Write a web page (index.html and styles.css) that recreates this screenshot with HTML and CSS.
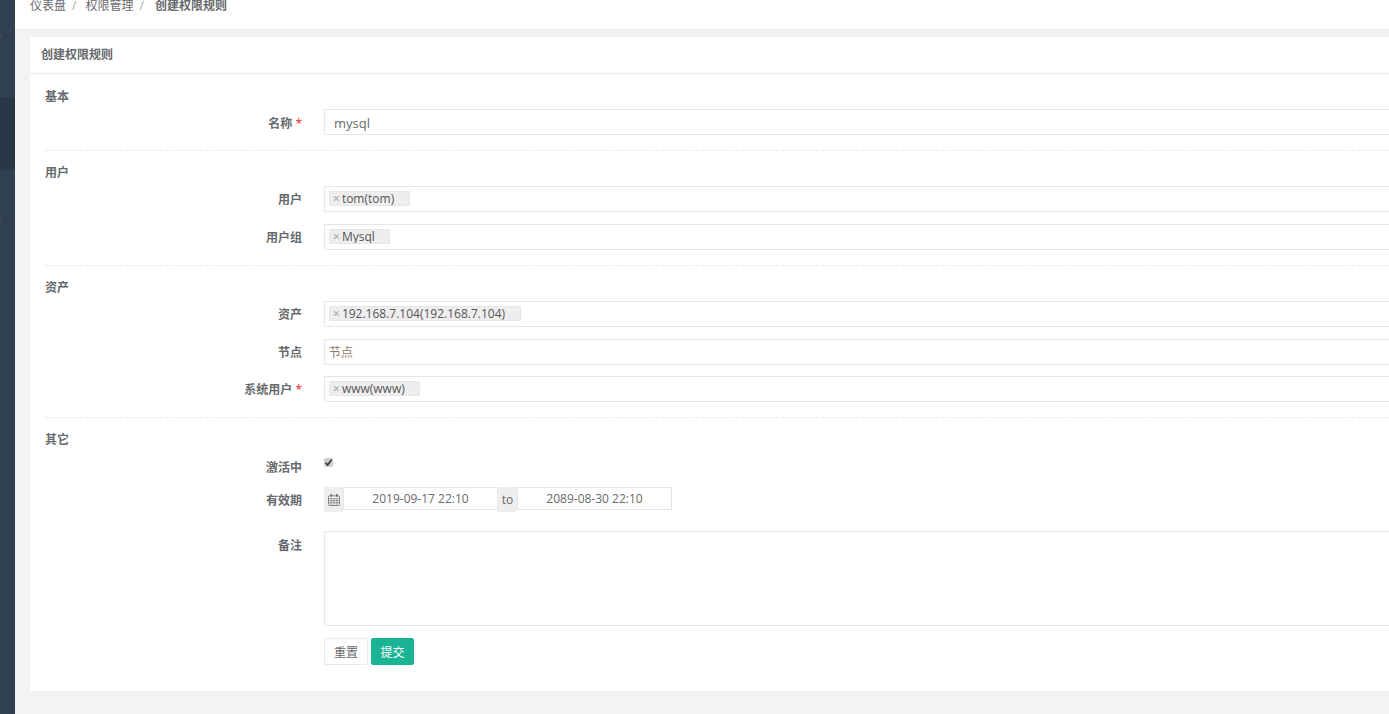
FILE: index.html
```html
<!DOCTYPE html>
<html lang="zh">
<head>
<meta charset="utf-8">
<title>创建权限规则</title>
<link rel="stylesheet" href="styles.css">
</head>
<body>
<div class="app">
  <aside class="sidebar">
    <div class="side-top"><i class="mark m1"></i><i class="mark m2"></i></div>
    <div class="side-active"></div>
    <div class="side-bottom"><i class="mark m3"></i><i class="mark m4"></i></div>
  </aside>
  <main class="main">
    <nav class="crumbs">
      <span class="crumb">仪表盘</span><span class="sep">/</span>
      <span class="crumb">权限管理</span><span class="sep">/</span>
      <strong class="crumb-current">创建权限规则</strong>
    </nav>
    <section class="card">
      <h5 class="card-title">创建权限规则</h5>
      <form class="form">
        <h3 class="group">基本</h3>
        <div class="row r-name"><label class="lbl">名称 <em>*</em></label><div class="field text-field">mysql</div></div>
        <div class="dash"></div>

        <h3 class="group">用户</h3>
        <div class="row r-a"><label class="lbl">用户</label><div class="field"><span class="tag t-tom"><b>×</b>tom(tom)</span></div></div>
        <div class="row r-b"><label class="lbl">用户组</label><div class="field"><span class="tag t-mysql"><b>×</b>Mysql</span></div></div>
        <div class="dash"></div>

        <h3 class="group">资产</h3>
        <div class="row r-a"><label class="lbl">资产</label><div class="field"><span class="tag t-ip"><b>×</b>192.168.7.104(192.168.7.104)</span></div></div>
        <div class="row r-b"><label class="lbl">节点</label><div class="field placeholder">节点</div></div>
        <div class="row r-c"><label class="lbl">系统用户 <em>*</em></label><div class="field"><span class="tag t-www"><b>×</b>www(www)</span></div></div>
        <div class="dash"></div>

        <h3 class="group">其它</h3>
        <div class="row r-check"><label class="lbl">激活中</label><span class="check"><svg viewBox="0 0 9 9" width="9" height="9"><path d="M1.6 4.8 3.6 7 7.6 1.8" fill="none" stroke="#333" stroke-width="1.6"/></svg></span></div>
        <div class="row r-date"><label class="lbl">有效期</label>
          <div class="daterange">
            <span class="addon"><svg viewBox="0 1 13 13" width="12" height="12"><path d="M1.5 3h10a1 1 0 0 1 1 1v8.500a1 1 0 0 1-1 1h-10a1 1 0 0 1-1-1V4a1 1 0 0 1 1-1z" fill="#f4f4f4" stroke="#77797b"/><path d="M1 6h11M1 8.300h11M1 10.600h11M3.500 6v7M6.500 6v7M9.500 6v7" fill="none" stroke="#8a8c8e" stroke-width=".9"/><path d="M3.500 1v3M9.500 1v3" stroke="#676a6c" stroke-width="1.600"/></svg></span>
            <span class="date">2019-09-17 22:10</span>
            <span class="addon">to</span>
            <span class="date">2089-08-30 22:10</span>
          </div>
        </div>
        <div class="row r-note"><label class="lbl">备注</label><div class="field area"></div></div>
        <div class="actions">
          <button type="button" class="btn">重置</button>
          <button type="button" class="btn primary">提交</button>
        </div>
      </form>
    </section>
  </main>
</div>
</body>
</html>
```
FILE: styles.css
```css
* { box-sizing: border-box; }
html, body { margin: 0; height: 100%; overflow: hidden; }
body {
  font-family: "Open Sans", "Noto Sans CJK SC", sans-serif;
  font-size: 13px;
  color: #676a6c;
  background: #f3f3f4;
}
.app { display: flex; height: 714px; width: 1389px; overflow: hidden; }
.sidebar {
  flex: 0 0 15px;
  display: flex;
  flex-direction: column;
  background: #2f4050;
}
.side-top { height: 97px; position: relative; }
.side-active { height: 73px; background: #293846; }
.side-bottom { flex: 1; position: relative; }
.mark { position: absolute; left: 0; width: 1px; height: 3px; background: #5a4358; }
.m1 { top: 34px; }
.m2 { top: 71px; }
.m3 { top: 13px; }
.m4 { top: 50px; }
.main { flex: 1; min-width: 0; }
.crumbs {
  height: 30px;
  background: #fff;
  border-bottom: 1px solid #e7eaec;
  padding: 0 0 0 15px;
  line-height: 11px;
  font-size: 12px;
  white-space: nowrap;
  color: #676a6c;
}
.sep { color: #aaa; padding: 0 6px; }
.crumb-current { font-weight: 700; margin-left: 2px; }
.card {
  margin: 7px 0 0 15px;
  width: 1500px;
  height: 654px;
  background: #fff;
}
.card-title {
  margin: 0;
  height: 37px;
  padding: 11px 0 0 11px;
  font-size: 12px;
  line-height: 14px;
  font-weight: 600;
  border-bottom: 1px solid #e7eaec;
}
.form { padding: 0 0 0 15px; }
.group {
  margin: 0;
  padding-top: 15px;
  height: 35px;
  line-height: 16px;
  font-size: 12px;
  font-weight: 700;
  color: #676a6c;
}
.dash + .group { padding-top: 14px; }
.row { display: flex; align-items: flex-start; }
.lbl {
  flex: 0 0 257px;
  height: 26px;
  text-align: right;
  font-size: 12px;
  font-weight: 700;
  line-height: 28px;
}
.lbl em { color: #ed1c24; font-style: normal; font-weight: 400; }
.r-name .lbl { line-height: 30px; }
.field {
  flex: 0 0 1200px;
  margin-left: 22px;
  height: 26px;
  background: #fff;
  border: 1px solid #e5e6e7;
  border-radius: 1px;
  padding: 4px 0 0 4px;
}
.text-field { padding: 0 0 0 9px; line-height: 26px; }
.placeholder { padding: 0 0 0 4px; line-height: 26px; color: #8a7a6a; font-size: 12px; }
.tag {
  display: block;
  height: 15px;
  line-height: 14px;
  background: #eee;
  border: 1px solid #e6e6e6;
  border-radius: 1px;
  font-size: 12px;
  color: #555;
  padding-left: 3px;
  white-space: nowrap;
  overflow: hidden;
}
.tag b { font-weight: 400; color: #999; margin-right: 2px; }
.t-tom { width: 81px; }
.t-mysql { width: 61px; }
.t-ip { width: 192px; }
.t-www { width: 91px; }
.r-b { margin-top: 12px; }
.r-c { margin-top: 11px; }
.dash { height: 1px; border-top: 1px dashed #e7eaec; margin-top: 15px; }
.r-check { height: 34px; padding-top: 6px; }
.r-check .lbl { line-height: 16px; position: relative; top: 1px; height: 16px; }
.check {
  margin: -1px 0 0 22px;
  width: 9px;
  height: 9px;
  background: #ccc;
  border-radius: 2px;
  display: block;
  line-height: 0;
}
.r-date { height: 44px; }
.daterange { display: flex; margin-left: 22px; height: 23px; }
.addon {
  display: flex;
  align-items: center;
  justify-content: center;
  flex: 0 0 19px;
  background: #eee;
  height: 25px;
  font-size: 12px;
}
.date {
  height: 23px;
  width: 155px;
  border: 1px solid #e5e6e7;
  background: #fff;
  text-align: center;
  line-height: 21px;
  font-size: 12px;
}
.r-note .lbl { line-height: 30px; }
.area { height: 95px; padding: 0; }
.actions { display: flex; gap: 3px; margin: 12px 0 0 279px; }
.btn {
  height: 27px;
  width: 44px;
  padding: 0;
  font: 400 12px "Open Sans", "Noto Sans CJK SC", sans-serif;
  color: #676a6c;
  background: #fff;
  border: 1px solid #e7eaec;
  border-radius: 2px;
}
.btn.primary { width: 43px; background: #1ab394; border-color: #1ab394; color: #fff; }
```
